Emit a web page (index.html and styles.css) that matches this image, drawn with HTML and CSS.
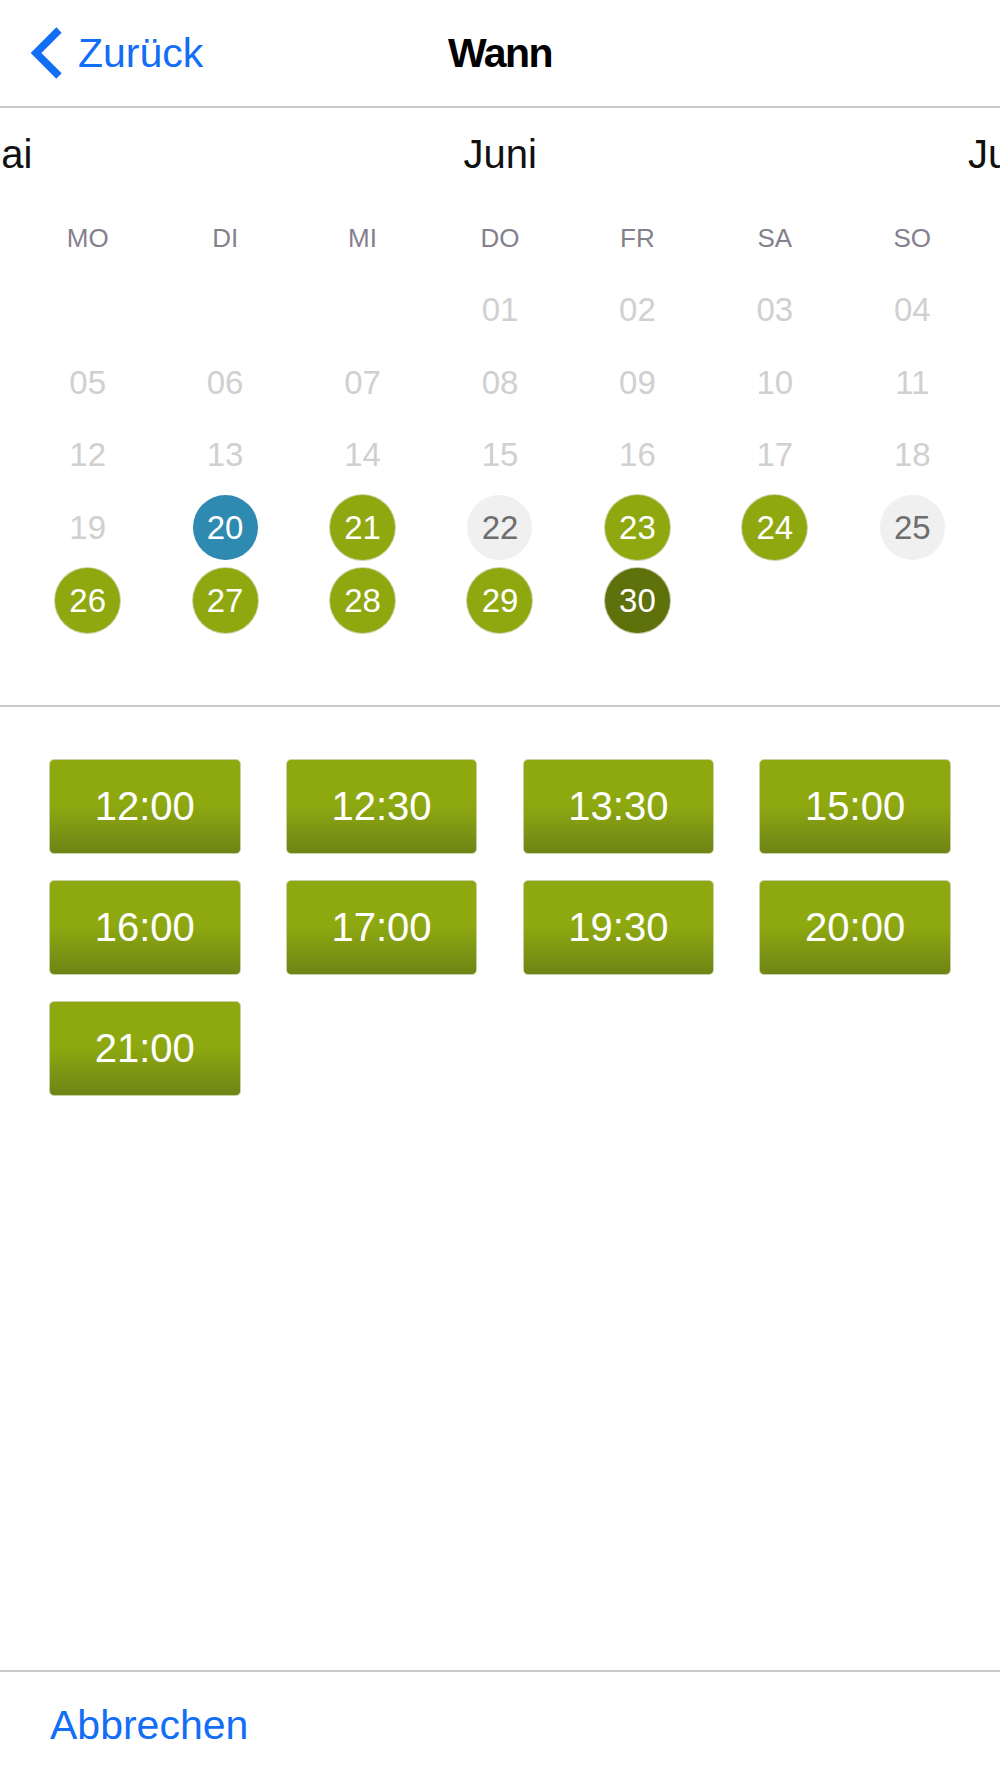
FILE: index.html
```html
<!DOCTYPE html>
<html lang="de">
<head>
<meta charset="utf-8">
<title>Wann</title>
<link rel="stylesheet" href="styles.css">
</head>
<body>
<header class="nav">
  <a class="back">
    <svg class="chevron" width="34" height="52" viewBox="0 0 34 52"><polyline points="30,3 7,26 30,49" fill="none" stroke="#136ef6" stroke-width="7.5" stroke-linejoin="miter" stroke-linecap="butt"/></svg>
    <span>Zurück</span>
  </a>
  <h1 class="title">Wann</h1>
  <span></span>
</header>
<main class="content">
  <section class="calendar">
    <div class="months-wrap">
      <div class="months"><span>Mai</span><span>Juni</span><span>Juli</span></div>
    </div>
    <div class="weekdays"><span>MO</span><span>DI</span><span>MI</span><span>DO</span><span>FR</span><span>SA</span><span>SO</span></div>
    <div class="days">
      <div class="cell"></div><div class="cell"></div><div class="cell"></div>
      <div class="cell"><span class="day past">01</span></div>
      <div class="cell"><span class="day past">02</span></div>
      <div class="cell"><span class="day past">03</span></div>
      <div class="cell"><span class="day past">04</span></div>
      <div class="cell"><span class="day past">05</span></div>
      <div class="cell"><span class="day past">06</span></div>
      <div class="cell"><span class="day past">07</span></div>
      <div class="cell"><span class="day past">08</span></div>
      <div class="cell"><span class="day past">09</span></div>
      <div class="cell"><span class="day past">10</span></div>
      <div class="cell"><span class="day past">11</span></div>
      <div class="cell"><span class="day past">12</span></div>
      <div class="cell"><span class="day past">13</span></div>
      <div class="cell"><span class="day past">14</span></div>
      <div class="cell"><span class="day past">15</span></div>
      <div class="cell"><span class="day past">16</span></div>
      <div class="cell"><span class="day past">17</span></div>
      <div class="cell"><span class="day past">18</span></div>
      <div class="cell"><span class="day past">19</span></div>
      <div class="cell"><span class="day today">20</span></div>
      <div class="cell"><span class="day open">21</span></div>
      <div class="cell"><span class="day closed">22</span></div>
      <div class="cell"><span class="day open">23</span></div>
      <div class="cell"><span class="day open">24</span></div>
      <div class="cell"><span class="day closed">25</span></div>
      <div class="cell"><span class="day open">26</span></div>
      <div class="cell"><span class="day open">27</span></div>
      <div class="cell"><span class="day open">28</span></div>
      <div class="cell"><span class="day open">29</span></div>
      <div class="cell"><span class="day selected">30</span></div>
      <div class="cell"></div><div class="cell"></div>
    </div>
  </section>
  <section class="times">
    <button class="slot">12:00</button>
    <button class="slot">12:30</button>
    <button class="slot">13:30</button>
    <button class="slot">15:00</button>
    <button class="slot">16:00</button>
    <button class="slot">17:00</button>
    <button class="slot">19:30</button>
    <button class="slot">20:00</button>
    <button class="slot">21:00</button>
  </section>
</main>
<footer class="footer">
  <a class="cancel">Abbrechen</a>
</footer>
</body>
</html>
```

FILE: styles.css
```css
* { box-sizing: border-box; }
html, body { margin: 0; padding: 0; background: #fff; }
body {
  font-family: "Liberation Sans", Arial, sans-serif;
  min-height: 1778px;
  display: flex;
  flex-direction: column;
  color: #111;
}

.nav {
  height: 108px;
  border-bottom: 2px solid #c9c9c9;
  display: grid;
  grid-template-columns: 1fr auto 1fr;
  align-items: center;
  padding: 0 29px;
}
.back {
  display: flex;
  align-items: center;
  color: #136ef6;
  font-size: 41px;
  line-height: 41px;
}
.chevron { display: block; margin-right: 15px; }
.title {
  margin: 0;
  font-size: 41px;
  line-height: 41px;
  font-weight: bold;
  letter-spacing: -1.5px;
  color: #000;
}

.content { flex: 1; }

.calendar {
  padding: 26px 0 68px;
  border-bottom: 2px solid #c9c9c9;
}
.months-wrap { overflow: hidden; }
.months {
  display: flex;
  justify-content: space-between;
  margin: 0 -28px 0 -32px;
  font-size: 40px;
  line-height: 40px;
  color: #111;
}
.weekdays {
  margin-top: 51px;
  padding: 0 19px;
  display: grid;
  grid-template-columns: repeat(7, 1fr);
  font-size: 26px;
  line-height: 26px;
  text-align: center;
  color: #84818d;
}
.days {
  margin-top: 22px;
  padding: 0 19px;
  display: grid;
  grid-template-columns: repeat(7, 1fr);
  grid-auto-rows: 72.75px;
}
.cell {
  display: flex;
  align-items: center;
  justify-content: center;
}
.day {
  width: 65px;
  height: 65px;
  border-radius: 50%;
  display: flex;
  align-items: center;
  justify-content: center;
  font-size: 33px;
  line-height: 33px;
}
.past { color: #d0d0d0; }
.today { background: #2e8ab0; color: #fff; }
.open { background: #8fa80f; color: #fff; box-shadow: 0 0 0 1px #cfd5b0; }
.closed { background: #f0f0f0; color: #6e6e6e; }
.selected { background: #5e710b; color: #fff; box-shadow: 0 0 0 1px #c5cab0; }

.times {
  padding: 52px 0 0 49px;
  display: grid;
  grid-template-columns: repeat(4, 191.5px);
  column-gap: 45.3px;
  row-gap: 26px;
}
.slot {
  height: 95px;
  border: 1px solid #c9cfa6;
  border-radius: 5px;
  background: linear-gradient(to bottom, #8ea910 0%, #8ea910 48%, #6e8416 100%);
  color: #fff;
  font-family: "Liberation Sans", Arial, sans-serif;
  font-size: 40px;
  line-height: 40px;
  padding: 0;
  margin: 0;
}

.footer {
  height: 108px;
  border-top: 2px solid #c9c9c9;
  display: flex;
  align-items: center;
  padding-left: 50px;
}
.cancel {
  color: #136ef6;
  font-size: 41px;
  line-height: 41px;
}
```
